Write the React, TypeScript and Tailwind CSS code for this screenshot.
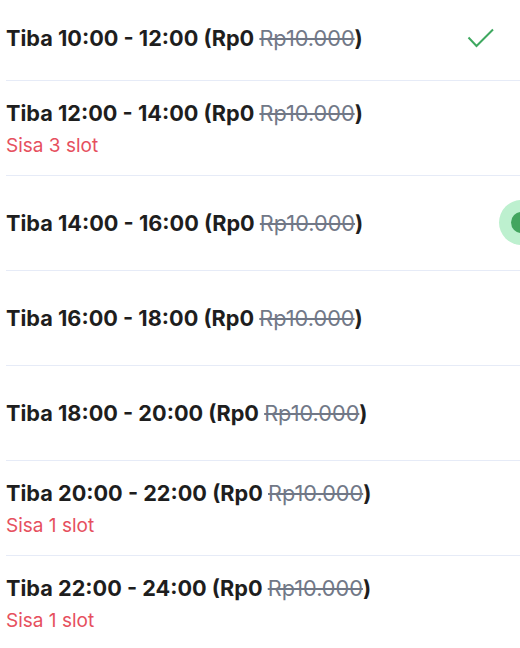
import React from "react";

type Slot = { from: string; to: string; sisa?: string; state?: "checked" | "radio" };

const slots: Slot[] = [
  { from: "10:00", to: "12:00", state: "checked" },
  { from: "12:00", to: "14:00", sisa: "Sisa 3 slot" },
  { from: "14:00", to: "16:00", state: "radio" },
  { from: "16:00", to: "18:00" },
  { from: "18:00", to: "20:00" },
  { from: "20:00", to: "22:00", sisa: "Sisa 1 slot" },
  { from: "22:00", to: "24:00", sisa: "Sisa 1 slot" },
];

export default function App() {
  return (
    <div
      className="w-[520px] h-[648px] bg-white overflow-hidden"
      style={{ fontFamily: "Inter, 'Noto Sans', sans-serif" }}
    >
      {slots.map((s, i) => (
        <div
          key={i}
          className={`relative ml-[6px] flex flex-col justify-center ${
            i === 0 ? "h-[81px] pb-[5px]" : "h-[95px]"
          } ${i < slots.length - 1 ? "border-b border-[#e6ebf7]" : ""}`}
        >
          <div className="text-[21.7px] leading-[30px] font-bold text-[#1e1e1e]">
            Tiba {s.from} - {s.to} (Rp0{" "}
            <span className="font-normal text-[#717887] line-through">Rp10.000</span>)
          </div>
          {s.sisa && (
            <div className="text-[19px] leading-[26px] text-[#e6505e] mt-[5px]">{s.sisa}</div>
          )}
          {s.state === "checked" && (
            <svg
              className="absolute right-[25px] top-[28px]"
              width="28"
              height="20"
              viewBox="0 0 28 20"
              fill="none"
            >
              <path d="M1.5 9.5 L9.5 18 L26 1.5" stroke="#3fa860" strokeWidth="2" />
            </svg>
          )}
          {s.state === "radio" && (
            <div className="absolute right-[-24px] top-[24px] w-[45px] h-[45px] rounded-full bg-[#bdf0cf] flex items-center justify-center">
              <div className="w-[21px] h-[21px] rounded-full bg-[#43a55f]" />
            </div>
          )}
        </div>
      ))}
    </div>
  );
}
